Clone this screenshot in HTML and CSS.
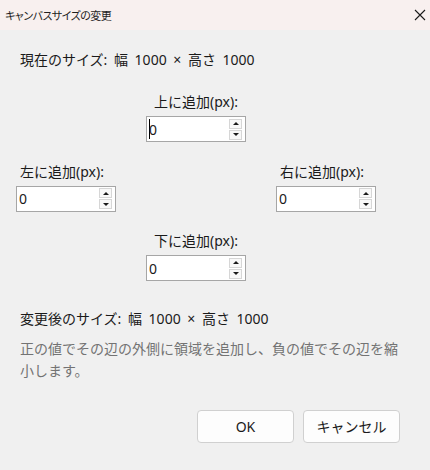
FILE: index.html
```html
<!DOCTYPE html>
<html lang="ja">
<head>
<meta charset="utf-8">
<title>キャンバスサイズの変更</title>
<link rel="stylesheet" href="styles.css">
</head>
<body>
<div class="dialog">
  <div class="titlebar">
    <span class="title">キャンバスサイズの変更</span>
    <svg class="close" width="12" height="12" viewBox="0 0 12 12"><path d="M1 1L11 11M11 1L1 11" stroke="#1a1a1a" stroke-width="1.1" fill="none"/></svg>
  </div>
  <div class="content">
    <div class="info">現在のサイズ: 幅 1000 × 高さ 1000</div>
    <div class="grid">
      <div class="cell top">
        <div class="label center">上に追加(px):</div>
        <div class="spin"><span class="val"><span class="caret"></span>0</span><span class="btns"><span class="sbtn"><i class="up"></i></span><span class="sbtn"><i class="down"></i></span></span></div>
      </div>
      <div class="cell left">
        <div class="label">左に追加(px):</div>
        <div class="spin"><span class="val">0</span><span class="btns"><span class="sbtn"><i class="up"></i></span><span class="sbtn"><i class="down"></i></span></span></div>
      </div>
      <div class="cell right">
        <div class="label">右に追加(px):</div>
        <div class="spin"><span class="val">0</span><span class="btns"><span class="sbtn"><i class="up"></i></span><span class="sbtn"><i class="down"></i></span></span></div>
      </div>
      <div class="cell bottom">
        <div class="label center">下に追加(px):</div>
        <div class="spin"><span class="val">0</span><span class="btns"><span class="sbtn"><i class="up"></i></span><span class="sbtn"><i class="down"></i></span></span></div>
      </div>
    </div>
    <div class="info after">変更後のサイズ: 幅 1000 × 高さ 1000</div>
    <div class="desc">正の値でその辺の外側に領域を追加し、負の値でその辺を縮小します。</div>
    <div class="actions">
      <button class="btn">OK</button>
      <button class="btn">キャンセル</button>
    </div>
  </div>
</div>
</body>
</html>
```
FILE: styles.css
```css
html, body {
  margin: 0;
  padding: 0;
}
body {
  width: 430px;
  height: 470px;
  background: #f0f0f0;
  font-family: "Noto Sans", "Noto Sans CJK JP", sans-serif;
  color: #1a1a1a;
  overflow: hidden;
}
.dialog {
  display: flex;
  flex-direction: column;
}
.titlebar {
  height: 30px;
  background: #f8f0ef;
  display: flex;
  align-items: center;
  justify-content: space-between;
  padding: 0 3px 0 5px;
}
.title {
  font-size: 11px;
  letter-spacing: -0.5px;
  font-feature-settings: "palt";
  color: #1f1f1f;
}
.close {
  display: block;
  margin-right: 1px;
}
.content {
  padding: 0 24px 0 16px;
  display: flex;
  flex-direction: column;
}
.info {
  font-size: 14px;
  line-height: 20px;
  padding-left: 4px;
  margin-top: 20px;
  word-spacing: 3px;
}
.grid {
  margin-top: 22px;
  display: grid;
  grid-template-columns: 100px 160px 100px;
  row-gap: 19.5px;
}
.cell {
  display: flex;
  flex-direction: column;
  gap: 4px;
}
.cell.top { grid-column: 2; grid-row: 1; align-items: center; }
.cell.left { grid-column: 1; grid-row: 2; }
.cell.right { grid-column: 3; grid-row: 2; }
.cell.bottom { grid-column: 2; grid-row: 3; align-items: center; }
.label {
  font-size: 14px;
  line-height: 20px;
  padding-left: 4px;
  white-space: nowrap;
}
.label.center {
  padding-left: 0;
}
.spin {
  width: 100px;
  height: 26px;
  box-sizing: border-box;
  border: 1px solid #a6a6a6;
  background: #fff;
  display: flex;
  align-items: center;
}
.val {
  flex: 1;
  font-size: 14px;
  padding-left: 2px;
  display: flex;
  align-items: center;
}
.caret {
  display: inline-block;
  width: 1px;
  height: 20px;
  background: #000;
  margin-right: -1px;
}
.btns {
  display: flex;
  flex-direction: column;
  gap: 1px;
  margin-right: 3px;
}
.sbtn {
  width: 13px;
  height: 10px;
  box-sizing: border-box;
  border: 1px solid #d6d6d6;
  background: #f8f8f8;
  display: flex;
  align-items: center;
  justify-content: center;
}
.sbtn i {
  display: block;
  width: 0;
  height: 0;
  border-left: 3px solid transparent;
  border-right: 3px solid transparent;
}
.sbtn i.up { border-bottom: 3px solid #1a1a1a; }
.sbtn i.down { border-top: 3px solid #1a1a1a; }
.info.after {
  margin-top: 27.5px;
}
.desc {
  margin-top: 9px;
  padding-left: 4px;
  font-size: 14px;
  line-height: 22px;
  color: #737373;
}
.actions {
  margin-top: 28px;
  display: flex;
  justify-content: flex-end;
  gap: 9px;
  padding-right: 6px;
}
.btn {
  width: 97px;
  height: 33px;
  box-sizing: border-box;
  background: #fdfdfd;
  border: 1px solid #d0d0d0;
  border-radius: 4px;
  font-family: "Noto Sans", "Noto Sans CJK JP", sans-serif;
  font-size: 14px;
  color: #1a1a1a;
  padding: 0;
}
```
